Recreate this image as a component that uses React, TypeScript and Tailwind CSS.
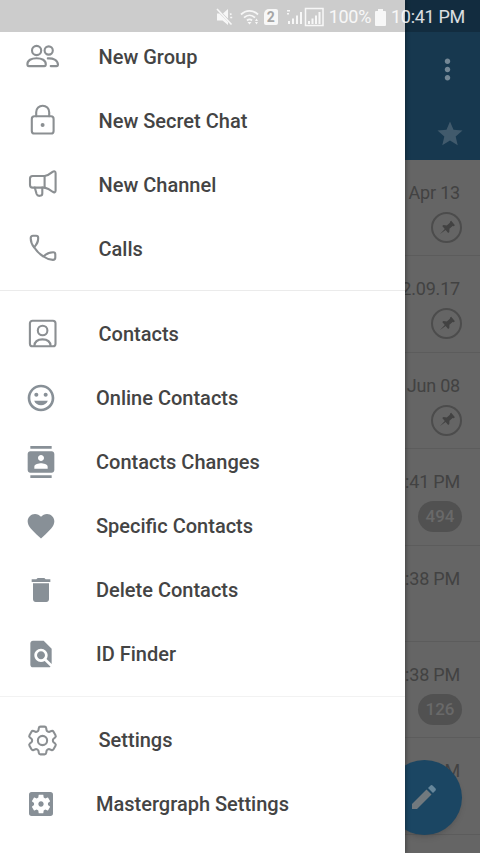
import type { ReactNode } from "react";
import { HiOutlineCog6Tooth } from "react-icons/hi2";
import {
  MdContacts,
  MdDelete,
  MdFavorite,
  MdFindInPage,
  MdMood,
  MdMoreVert,
  MdSettingsApplications,
  MdStar,
} from "react-icons/md";

function LineIcon({ children }: { children: ReactNode }) {
  return (
    <svg
      viewBox="0 0 36 36"
      className="size-9 shrink-0"
      fill="none"
      stroke="currentColor"
      strokeWidth="2.1"
      strokeLinecap="round"
      strokeLinejoin="round"
    >
      {children}
    </svg>
  );
}

const groupIcon = (
  <LineIcon>
    <circle cx="12.6" cy="11.5" r="4.6" />
    <circle cx="24.7" cy="11.5" r="4.1" />
    <path d="M3.4 25.6C3.1 21.2 7.6 19.2 12.6 19.2s9.5 2 9.2 6.4c0 .9-.6 1.5-1.5 1.5H4.9c-.9 0-1.5-.6-1.5-1.5z" />
    <path d="M23.8 19.4c5.2-.4 9.9 1.6 10.2 6.2 0 .9-.6 1.5-1.5 1.5h-5.8" />
  </LineIcon>
);

const lockIcon = (
  <LineIcon>
    <rect x="7.8" y="13.3" width="21.8" height="17.2" rx="2.6" />
    <path d="M12.2 13.3V9.2a6.5 6.5 0 0 1 13 0v4.1" />
    <circle cx="18.6" cy="22" r="2" fill="currentColor" stroke="none" />
  </LineIcon>
);

const channelIcon = (
  <LineIcon>
    <path d="M20.6 9H8.6C7 9 6 10 6 11.6v6.4c0 1.6 1 2.6 2.6 2.6h12z" />
    <path d="M20.6 9c3.3-.5 5.8-2.3 8-4.1 1.6-1.2 3-.6 3 1.3v17.2c0 1.9-1.4 2.500-3 1.300-2.200-1.800-4.700-3.600-8-4.100" />
    <path d="M10.800 20.600l1.800 6.400c1 2.700 5.700 2.300 5.700-.6v-5.800" />
  </LineIcon>
);

const callIcon = (
  <LineIcon>
    <path d="M6.700 7.200c0-1.500.8-2.400 2.300-2.400h3.100c1.400 0 2.100.7 2.100 2.100 0 4.200-.9 5.700-4.100 9.400C7.900 13.500 6.700 10.500 6.700 7.200z" />
    <path d="M10.100 16.300c2.300 3.700 5.500 6.900 9.300 9.200 3.500-3.300 5.400-4.200 9.800-4.200 1.400 0 2.100.7 2.100 2.100v3.100c0 1.500-.9 2.400-2.400 2.400-3.400 0-6.600-1.400-9.500-3.400" />
  </LineIcon>
);

const contactsIcon = (
  <LineIcon>
    <rect x="5.900" y="4.700" width="25.600" height="25.600" rx="2.600" />
    <circle cx="18.600" cy="14.500" r="4.800" />
    <path d="M10.400 30c.2-4.600 3.500-6.600 8.100-6.600s7.900 2 8.100 6.600" />
  </LineIcon>
);

interface ItemProps {
  icon: ReactNode;
  label: string;
  outlined?: boolean;
}

function MenuItem({ icon, label, outlined }: ItemProps) {
  return (
    <div
      className={
        outlined
          ? "flex h-16 items-center pl-[98.5px] text-xl font-medium"
          : "flex h-16 items-center pl-24 text-xl font-medium"
      }
    >
      <span
        className={
          outlined
            ? "-ml-[74.5px] flex w-[74.5px] shrink-0 text-[#8b8f92]"
            : "-ml-[71px] flex w-[71px] shrink-0 text-[32px] text-[#889097]"
        }
      >
        {icon}
      </span>
      <span className="whitespace-nowrap">{label}</span>
    </div>
  );
}

interface Chat {
  time: string;
  pinned?: boolean;
  unread?: number;
}

const chats: Chat[] = [
  { time: "Apr 13", pinned: true },
  { time: "2.09.17", pinned: true },
  { time: "Jun 08", pinned: true },
  { time: "10:41 PM", unread: 494 },
  { time: "10:38 PM" },
  { time: "10:38 PM", unread: 126 },
  { time: "10:37 PM" },
  { time: "" },
];

function ChatRow({ time, pinned, unread }: Chat) {
  return (
    <div className="flex h-[96.4px] shrink-0 flex-col items-end border-b border-[#5c5c5c] pt-5 pr-5">
      <p className="h-[25px] text-lg leading-[25px] tracking-[-0.2px] text-[#424242]">{time}</p>
      {pinned && (
        <div className="mt-[7px] -mr-[2px] flex size-[31px] items-center justify-center rounded-full border-2 border-[#4c4c4c]">
          <svg viewBox="0 0 24 24" className="size-5 rotate-[50deg] text-[#424242]" fill="currentColor">
            <path d="M8.500 2.500h7v2l-1 .8v5l3 2.700v1.800h-4.700L12 23l-.8-8.200H6.500V13l3-2.700v-5l-1-.8z" />
          </svg>
        </div>
      )}
      {unread && (
        <div className="mt-[7px] -mr-[2px] flex h-[31px] w-11 items-center justify-center rounded-full bg-[#515151] text-[17px] font-medium text-[#696969]">
          {unread}
        </div>
      )}
    </div>
  );
}

function StatusBar() {
  return (
    <div className="absolute inset-x-0 top-0 flex h-8 items-center justify-end bg-black/20 pt-0.5 pr-[15px] text-white/85">
      <svg viewBox="0 0 18 18" className="mr-[7px] size-[18px]" fill="currentColor">
        <path d="M2 5.500h2.500L13 14v3l-5.500-4.500H2zM13 1v9.500L8 5.500z" />
        <path d="M2 1l14.500 15.500M15 6.500l1.500-.8M15.200 9.500h2" fill="none" stroke="currentColor" strokeWidth="1.600" />
      </svg>
      <svg viewBox="0 0 21 18" className="mr-[3px] h-[18px] w-[21px]" fill="none" stroke="currentColor" strokeWidth="1.800">
        <path d="M1 6.500C6 1.600 13 1.600 18 6.500M4 9.700c3.400-3.200 7.700-3.200 11 0M7 12.500c1.700-1.500 3.500-1.500 5 0" />
        <path d="M7.500 14h4l-2 2.500zM15 13l1.500-2.500L18 13zM15 14l1.500 2.500L18 14z" fill="currentColor" stroke="none" />
      </svg>
      <div className="mr-[8px] flex h-4 w-[14px] items-center justify-center rounded-[2px] rounded-tl-[5px] bg-white/85 text-[14px] font-bold text-[#a6a6a6]">
        2
      </div>
      <svg viewBox="0 0 38 20" className="mr-[5px] h-5 w-[38px]" fill="currentColor">
        <path d="M1 3h3v1.500H1zM1 6h2v1.500H1zM2 14h2v3H2zM6 11.500h2V17H6zM10 8.500h2V17h-2zM14 5h2v12h-2z" />
        <path d="M22 14h2v3h-2zM25.500 11.500h2V17h-2zM29 8.500h2V17h-2zM32.500 5h2v12h-2z" />
        <rect x="19.500" y="1.500" width="17.500" height="17" fill="none" stroke="currentColor" strokeWidth="1.500" />
      </svg>
      <span className="mr-[4px] text-lg tracking-[-0.3px]">100%</span>
      <svg viewBox="0 0 11 17" className="mr-[5px] h-[17px] w-[11px]" fill="currentColor">
        <path d="M3 0h5v2h2a1 1 0 0 1 1 1v13a1 1 0 0 1-1 1H1a1 1 0 0 1-1-1V3a1 1 0 0 1 1-1h2z" />
      </svg>
      <span className="text-lg tracking-[-0.3px]">10:41 PM</span>
    </div>
  );
}

export default function App() {
  return (
    <div className="relative h-[853px] w-[480px] overflow-hidden bg-[#656565] font-[Roboto,sans-serif]">
      <div className="flex h-full flex-col">
        <header className="flex h-40 shrink-0 flex-col items-end bg-[#17384f] pt-8">
          <div className="flex h-[75px] items-center pr-4">
            <MdMoreVert className="text-[33px] text-[#748795]" />
          </div>
          <div className="flex h-[53px] items-center pr-[15px]">
            <MdStar className="text-[30px] text-[#415a6c]" />
          </div>
        </header>
        {chats.map((chat, i) => (
          <ChatRow key={i} {...chat} />
        ))}
      </div>

      <div className="absolute top-[759.5px] left-[386.5px] flex size-[75px] items-center justify-center rounded-full bg-[#1b4663] shadow-md">
        <svg viewBox="0 0 26 26" className="size-[26px] text-[#71797e]" fill="currentColor">
          <path d="M1 25v-5L15.500 5.500l5 5L6 25z" />
          <path d="M17 4l2.300-2.300c.8-.8 1.700-.8 2.500 0l2.500 2.500c.8.8.8 1.700 0 2.500L22 9z" fill="#66869a" />
        </svg>
      </div>

      <aside className="absolute inset-y-0 left-0 w-[405px] overflow-hidden bg-white pt-[25px] text-[#444444] shadow-[1px_0_4px_rgba(0,0,0,0.35)]">
        <MenuItem outlined icon={groupIcon} label="New Group" />
        <MenuItem outlined icon={lockIcon} label="New Secret Chat" />
        <MenuItem outlined icon={channelIcon} label="New Channel" />
        <MenuItem outlined icon={callIcon} label="Calls" />
        <div className="mt-[9px] mb-[11px] h-px bg-[#ebebeb]" />
        <MenuItem outlined icon={contactsIcon} label="Contacts" />
        <MenuItem icon={<MdMood />} label="Online Contacts" />
        <MenuItem icon={<MdContacts />} label="Contacts Changes" />
        <MenuItem icon={<MdFavorite />} label="Specific Contacts" />
        <MenuItem icon={<MdDelete />} label="Delete Contacts" />
        <MenuItem icon={<MdFindInPage />} label="ID Finder" />
        <div className="mt-[10px] mb-[11px] h-px bg-[#f2f2f2]" />
        <MenuItem
          outlined
          icon={<HiOutlineCog6Tooth className="size-[37px] [stroke-width:1.35]" />}
          label="Settings"
        />
        <MenuItem icon={<MdSettingsApplications />} label="Mastergraph Settings" />
      </aside>

      <StatusBar />
    </div>
  );
}
